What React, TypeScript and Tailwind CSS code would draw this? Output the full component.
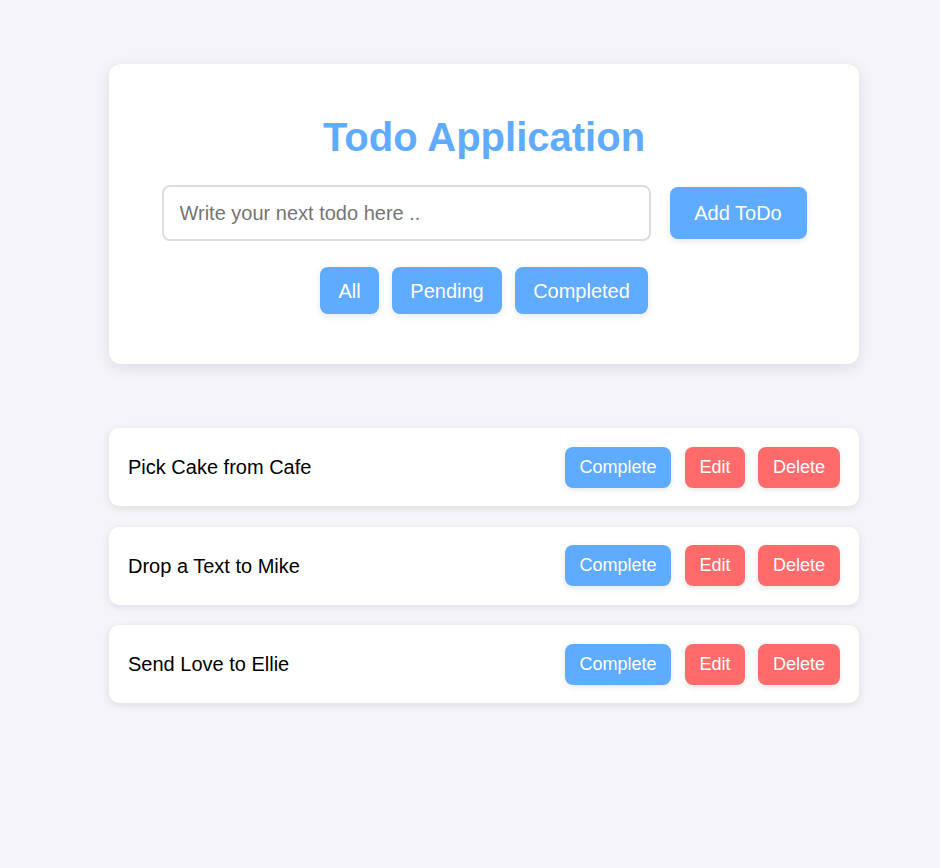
import React from "react";

const todos = ["Pick Cake from Cafe", "Drop a Text to Mike", "Send Love to Ellie"];

export default function App() {
  return (
    <div
      className="min-h-[868px] w-full bg-[#f4f4f9] pt-[64px]"
      style={{ fontFamily: '"Liberation Sans", Arial, sans-serif' }}
    >
      <div className="ml-[109px] w-[750px]">
        <div className="rounded-[12px] bg-white pt-[50px] pb-[50px] shadow-[0_4px_16px_rgba(0,0,0,0.1)]">
          <h1 className="text-center text-[40px] font-bold leading-[46px] text-[#5eabff]">
            Todo Application
          </h1>
          <div className="mt-[25px] flex items-center justify-center gap-[19px]">
            <input
              className="h-[56px] w-[489px] rounded-[8px] border-2 border-[#dddddd] px-[16px] text-[20px] text-black outline-none placeholder:text-[#757575]"
              placeholder="Write your next todo here .."
            />
            <button className="h-[52px] w-[137px] rounded-[8px] bg-[#5eabff] text-[20px] text-white shadow-[0_2px_6px_rgba(0,0,0,0.1)]">
              Add ToDo
            </button>
          </div>
          <div className="mt-[26px] flex items-center justify-center gap-[13px]">
            <button className="h-[47px] w-[59px] rounded-[8px] bg-[#5eabff] text-[20px] text-white shadow-[0_2px_6px_rgba(0,0,0,0.1)]">
              All
            </button>
            <button className="h-[47px] w-[110px] rounded-[8px] bg-[#5eabff] text-[20px] text-white shadow-[0_2px_6px_rgba(0,0,0,0.1)]">
              Pending
            </button>
            <button className="h-[47px] w-[133px] rounded-[8px] bg-[#5eabff] text-[20px] text-white shadow-[0_2px_6px_rgba(0,0,0,0.1)]">
              Completed
            </button>
          </div>
        </div>
        <div className="mt-[64px] flex flex-col gap-[20.5px]">
          {todos.map((t) => (
            <div
              key={t}
              className="flex h-[78px] items-center justify-between rounded-[10px] bg-white pl-[19px] pr-[19px] shadow-[0_2px_8px_rgba(0,0,0,0.1)]"
            >
              <span className="text-[20px] text-black">{t}</span>
              <div className="flex items-center">
                <button className="h-[41px] w-[106px] rounded-[8px] bg-[#5eabff] text-[18px] text-white shadow-[0_2px_6px_rgba(0,0,0,0.1)]">
                  Complete
                </button>
                <button className="ml-[14px] h-[41px] w-[60px] rounded-[8px] bg-[#ff6b6b] text-[18px] text-white shadow-[0_2px_6px_rgba(0,0,0,0.1)]">
                  Edit
                </button>
                <button className="ml-[13px] h-[41px] w-[82px] rounded-[8px] bg-[#ff6b6b] text-[18px] text-white shadow-[0_2px_6px_rgba(0,0,0,0.1)]">
                  Delete
                </button>
              </div>
            </div>
          ))}
        </div>
      </div>
    </div>
  );
}
